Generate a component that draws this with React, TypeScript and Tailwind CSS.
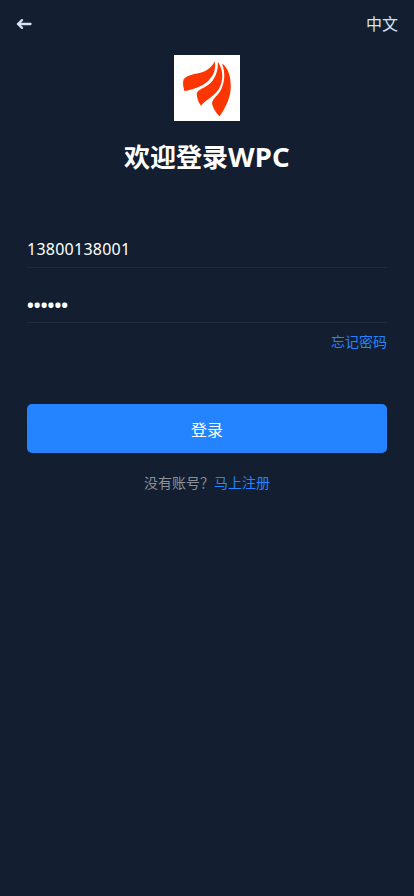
import { useState } from "react";

const Logo = () => (
  <svg viewBox="0 0 198 198" className="w-[66px] h-[66px] bg-white">
    <g fill="#fc3602">
      <path d="M122 19 C115 35 101 46 84 52 C65 58 40 59 29 73 C25 84 28 97 31 108 C58 103 86 94 103 77 C119 61 127 42 122 19Z" />
      <path d="M131 20 C134 49 122 73 105 88 C92 100 72 103 68 116 C69 130 74 143 81 152 C96 134 120 125 134 103 C149 78 149 43 131 20Z" />
      <path d="M144 26 C155 54 152 81 141 104 C133 121 115 130 114 145 C117 161 127 175 137 184 C151 163 167 137 170 103 C173 71 163 36 144 26Z" />
    </g>
  </svg>
);

const BackIcon = () => (
  <svg
    viewBox="0 0 16 12"
    className="w-4 h-3"
    fill="none"
    stroke="currentColor"
    strokeWidth="2.3"
    strokeLinecap="round"
    strokeLinejoin="round"
  >
    <path d="M6 2.1 L1.9 6 L6 9.9 M2 6 H14.5" />
  </svg>
);

const App = () => {
  const [phone, setPhone] = useState("13800138001");
  const [password, setPassword] = useState("123456");

  return (
    <div className="min-h-screen bg-[#131f30] font-['Noto_Sans','Noto_Sans_CJK_SC',sans-serif]">
      <header className="flex items-center justify-between h-12 px-4 text-[#d5e2f7]">
        <button aria-label="返回">
          <BackIcon />
        </button>
        <button className="text-base leading-6">中文</button>
      </header>
      <main className="flex flex-col px-[27px]">
        <div className="flex justify-center mt-[7px]">
          <Logo />
        </div>
        <h1 className="mt-4 text-center text-[26px] leading-10 font-bold text-white">
          欢迎登录<span className="text-[27.5px] leading-none tracking-[0.2px]">WPC</span>
        </h1>
        <form className="flex flex-col mt-[53px]" onSubmit={(e) => e.preventDefault()}>
          <input
            type="text"
            value={phone}
            onChange={(e) => setPhone(e.target.value)}
            className="h-[38px] text-base tracking-[0.25px] text-white border-b border-[#202c3e] outline-none"
          />
          <input
            type="password"
            value={password}
            onChange={(e) => setPassword(e.target.value)}
            className="h-[38px] mt-[17px] pt-[3px] text-[18px] tracking-[0.1px] font-bold text-white border-b border-[#202c3e] outline-none"
          />
          <a href="#" className="self-end mt-[9px] text-sm leading-5 text-[#2483ff]">
            忘记密码
          </a>
          <button
            type="submit"
            className="h-[49px] mt-[52px] pt-0.5 text-base text-white bg-[#2483ff] rounded-[5px]"
          >
            登录
          </button>
        </form>
        <p className="mt-5 text-center text-sm leading-5 text-[#8c9097]">
          没有账号？
          <a href="#" className="text-[#2483ff]">
            马上注册
          </a>
        </p>
      </main>
    </div>
  );
};

export default App;
